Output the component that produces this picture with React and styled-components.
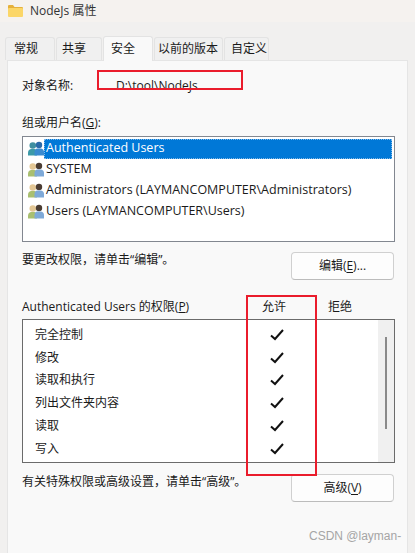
import { createGlobalStyle, styled } from "styled-components";

const Global = createGlobalStyle`
  html, body {
    margin: 0;
    padding: 0;
    background: #f3f1ef;
  }
`;

const font = `"Open Sans", "Noto Sans CJK SC", sans-serif`;

const Window = styled.div`
  position: relative;
  width: 415px;
  height: 553px;
  overflow: hidden;
  background: #f1f0ef;
  color: #1a1a1a;
  font-family: ${font};
  font-size: 12px;
  line-height: 16px;
`;
const TitleBar = styled.div`
  display: flex;
  align-items: center;
  gap: 7px;
  height: 22px;
  padding-left: 8px;
  background: #f5f2ef;
  color: #333;
  font-size: 12px;
`;
const TabStrip = styled.div`
  display: flex;
  align-items: flex-end;
  gap: 1px;
  height: 38px;
  padding-left: 5px;
`;
const Tab = styled.div`
  box-sizing: border-box;
  display: flex;
  align-items: center;
  width: ${(p) => p.$w}px;
  height: ${(p) => (p.$active ? 25 : 23)}px;
  padding-left: ${(p) => p.$pad}px;
  border: 1px solid #e3e3e3;
  border-bottom: none;
  border-radius: 3px 3px 0 0;
  background: ${(p) => (p.$active ? "#f9f9f9" : "#f0f0f0")};
  margin-bottom: ${(p) => (p.$active ? -1 : 0)}px;
  position: relative;
  z-index: ${(p) => (p.$active ? 1 : 0)};
`;
const Panel = styled.div`
  box-sizing: border-box;
  margin-left: 7px;
  width: 401px;
  height: 493px;
  padding: 17px 13px 0 14px;
  background: #f9f9f9;
  border: 1px solid #e5e5e5;
  border-bottom: none;
`;
const NameRow = styled.div`
  display: flex;
  height: 16px;
`;
const NameLabel = styled.div`
  width: 94px;
`;
const SectionLabel = styled.div`
  margin-top: 21px;
  height: 16px;
`;
const ListBox = styled.div`
  box-sizing: border-box;
  margin-top: 5px;
  height: 106px;
  width: 373px;
  padding: 1px;
  background: #fff;
  border: 1px solid #828790;
`;
const UserRow = styled.div`
  display: flex;
  align-items: center;
  height: 21px;
  padding-left: 4px;
`;
const UserName = styled.div`
  flex: 1;
  height: 20px;
  line-height: 18px;
  padding-left: 2px;
  margin-right: 1px;
  color: ${(p) => (p.$selected ? "#fff" : "#1a1a1a")};
  background: ${(p) => (p.$selected ? "#0078d7" : "transparent")};
  outline: ${(p) => (p.$selected ? "1px dotted #7fb8e8" : "none")};
  outline-offset: -1px;
  font-size: 12.5px;
`;
const NoteRow = styled.div`
  display: flex;
  justify-content: space-between;
  align-items: flex-start;
  width: 372px;
  margin-top: ${(p) => p.$top}px;
`;
const PushButton = styled.div`
  box-sizing: border-box;
  display: flex;
  align-items: center;
  justify-content: center;
  width: 103px;
  height: 28px;
  background: #fdfdfd;
  border: 1px solid #d0d0d0;
  border-bottom-color: #bcbcbc;
  border-radius: 4px;
  u {
    text-underline-offset: 2px;
  }
`;
const PermHeader = styled.div`
  display: grid;
  grid-template-columns: 216px 72px 60px;
  margin-top: 19px;
  height: 16px;
`;
const HeaderCell = styled.div`
  text-align: center;
`;
const PermTable = styled.div`
  box-sizing: border-box;
  display: flex;
  margin-top: 4px;
  width: 373px;
  height: 144px;
  border: 1px solid #6b6b6b;
  background: #fff;
`;
const PermRows = styled.div`
  flex: 1;
  padding-top: 3.5px;
`;
const PermRow = styled.div`
  display: grid;
  grid-template-columns: 235px 36px;
  align-items: center;
  height: 22.8px;
  padding-left: 12px;
`;
const ScrollTrack = styled.div`
  width: 16px;
  padding-top: 17px;
  background: #f0f0f0;
  display: flex;
  justify-content: center;
`;
const ScrollThumb = styled.div`
  width: 2px;
  height: 92px;
  background: #8a8a8a;
`;
const RedBox = styled.div`
  position: absolute;
  box-sizing: border-box;
  left: ${(p) => p.$x}px;
  top: ${(p) => p.$y}px;
  width: ${(p) => p.$w}px;
  height: ${(p) => p.$h}px;
  border: 2px solid #ea1c2c;
`;
const Watermark = styled.div`
  position: absolute;
  left: 309px;
  top: 527px;
  white-space: nowrap;
  color: #a5a5a5;
  font-family: "Liberation Sans", sans-serif;
  font-size: 12px;
  line-height: 18px;
`;

function FolderIcon() {
  return (
    <svg width="15" height="12" viewBox="0 0 15 12">
      <path d="M0 1Q0 0 1 0H5L6.5 2H14Q15 2 15 3V4H0Z" fill="#e5b13c" />
      <rect x="0" y="3" width="15" height="9" rx="1" fill="#fbd667" />
    </svg>
  );
}

function UsersIcon({ selected }) {
  const back = selected ? "#3d9aa8" : "#a9bf70";
  const backHead = selected ? "#3f8fa0" : "#e3c795";
  const front = selected ? "#3b8bd0" : "#7ea9d8";
  const frontHead = selected ? "#2b6aa8" : "#4a3c32";
  return (
    <svg width="16" height="16" viewBox="0 0 16 16">
      <circle cx="4.8" cy="4.5" r="3.3" fill={backHead} />
      <path d="M0 14.5V12Q0 8.5 3 8H6.5Q9 8.5 9 12V14.5Z" fill={back} />
      <circle cx="11" cy="4" r="3.2" fill={frontHead} />
      <path d="M6.5 14.5V11Q6.5 8 9 7.5H13Q16 8 16 11V14.5Z" fill={front} />
    </svg>
  );
}

function Check() {
  return (
    <svg width="14" height="12" viewBox="0 0 14 12">
      <path d="M1 6.5L5 10L13 1" fill="none" stroke="#111" strokeWidth="2" />
    </svg>
  );
}

const users = [
  "Authenticated Users",
  "SYSTEM",
  "Administrators (LAYMANCOMPUTER\\Administrators)",
  "Users (LAYMANCOMPUTER\\Users)",
];
const perms = ["完全控制", "修改", "读取和执行", "列出文件夹内容", "读取", "写入"];

export default function App() {
  return (
    <Window>
      <Global />
      <TitleBar>
        <FolderIcon />
        NodeJs 属性
      </TitleBar>
      <TabStrip>
        <Tab $w={50} $pad={8}>常规</Tab>
        <Tab $w={46} $pad={5}>共享</Tab>
        <Tab $w={50} $pad={7} $active>安全</Tab>
        <Tab $w={69} $pad={3}>以前的版本</Tab>
        <Tab $w={45} $pad={6}>自定义</Tab>
      </TabStrip>
      <Panel>
        <NameRow>
          <NameLabel>对象名称:</NameLabel>
          D:\tool\NodeJs
        </NameRow>
        <SectionLabel>组或用户名(<u>G</u>):</SectionLabel>
        <ListBox>
          {users.map((name, i) => (
            <UserRow key={name}>
              <UsersIcon selected={i === 0} />
              <UserName $selected={i === 0}>{name}</UserName>
            </UserRow>
          ))}
        </ListBox>
        <NoteRow $top={10}>
          <div>要更改权限，请单击“编辑”。</div>
          <PushButton>编辑(<u>E</u>)...</PushButton>
        </NoteRow>
        <PermHeader>
          <div>Authenticated Users 的权限(<u>P</u>)</div>
          <HeaderCell>允许</HeaderCell>
          <HeaderCell>拒绝</HeaderCell>
        </PermHeader>
        <PermTable>
          <PermRows>
            {perms.map((perm) => (
              <PermRow key={perm}>
                <div>{perm}</div>
                <Check />
              </PermRow>
            ))}
          </PermRows>
          <ScrollTrack>
            <ScrollThumb />
          </ScrollTrack>
        </PermTable>
        <NoteRow $top={11}>
          <div>有关特殊权限或高级设置，请单击“高级”。</div>
          <PushButton>高级(<u>V</u>)</PushButton>
        </NoteRow>
      </Panel>
      <RedBox $x={97} $y={70} $w={146} $h={20} />
      <RedBox $x={246} $y={295} $w={71} $h={181} />
      <Watermark>CSDN @layman-</Watermark>
    </Window>
  );
}
